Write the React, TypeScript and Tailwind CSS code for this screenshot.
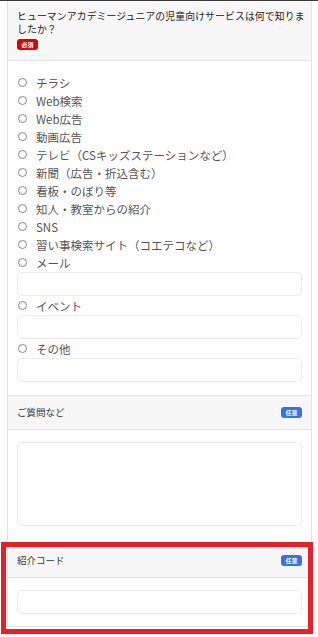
import React from "react";

const options: { label: string; input?: boolean }[] = [
  { label: "チラシ" },
  { label: "Web検索" },
  { label: "Web広告" },
  { label: "動画広告" },
  { label: "テレビ（CSキッズステーションなど）" },
  { label: "新聞（広告・折込含む）" },
  { label: "看板・のぼり等" },
  { label: "知人・教室からの紹介" },
  { label: "SNS" },
  { label: "習い事検索サイト（コエテコなど）" },
  { label: "メール", input: true },
  { label: "イベント", input: true },
  { label: "その他", input: true },
];

function Badge({ text, color }: { text: string; color: "red" | "blue" }) {
  return (
    <span
      className={
        "inline-flex items-center justify-center w-[21px] h-[11px] rounded-[3px] text-white text-[6px] leading-none font-bold " +
        (color === "red" ? "bg-[#cc0a0a]" : "bg-[#3a72d8]")
      }
    >
      {text}
    </span>
  );
}

export default function App() {
  return (
    <div className="relative w-[318px] h-[637px] bg-white overflow-hidden font-['Noto_Sans_CJK_JP','Noto_Sans',sans-serif]">
      <div className="h-[1px] bg-[#3a3a3a]" />
      <div className="ml-[7px] w-[305px] border-x border-b border-[#e2e2e2]">
        {/* Section 1 header */}
        <div className="bg-[#f7f7f7] px-[9px] pt-[9px] pb-[10px] border-b border-[#e4e4e4]">
          <p className="text-[9.8px] leading-[12.5px] text-[#222] font-normal tracking-[0.15px] whitespace-nowrap">
            ヒューマンアカデミージュニアの児童向けサービスは何で知りま
            <br />
            したか？
          </p>
          <div className="mt-[4px] flex">
            <Badge text="必須" color="red" />
          </div>
        </div>
        {/* Section 1 content */}
        <div className="px-[9px] pt-[12.5px] pb-[12.5px]">
          {options.map((o) => (
            <div key={o.label}>
              <label className="flex items-center h-[18px]">
                <span className="ml-[1px] w-[9px] h-[9px] rounded-full border border-[#888] bg-white" />
                <span className="ml-[9px] text-[11.5px] leading-[18px] text-[#555]">{o.label}</span>
              </label>
              {o.input && (
                <div className="h-[24px] mb-[1px] rounded-[5px] border border-[#ececec] bg-white" />
              )}
            </div>
          ))}
        </div>
        {/* Section 2 header */}
        <div className="flex items-center justify-between h-[35px] px-[9px] bg-[#f7f7f7] border-y border-[#e4e4e4]">
          <span className="text-[9.5px] text-[#333] font-normal">ご質問など</span>
          <Badge text="任意" color="blue" />
        </div>
        <div className="px-[9px] pt-[12px] pb-[17px]">
          <div className="h-[84px] rounded-[5px] border border-[#ececec] bg-white" />
        </div>
        {/* Section 3 header */}
        <div className="flex items-center justify-between h-[35px] px-[9px] bg-[#f7f7f7] border-y border-[#e4e4e4]">
          <span className="text-[9.5px] text-[#333] font-normal">紹介コード</span>
          <Badge text="任意" color="blue" />
        </div>
        <div className="px-[9px] pt-[12px] pb-[12px]">
          <div className="h-[24px] rounded-[5px] border border-[#ececec] bg-white" />
        </div>
      </div>
      {/* annotation overlay */}
      <div className="absolute left-[1px] top-[542px] w-[312px] h-[92px] border-[5px] border-[#e3212b] pointer-events-none" />
    </div>
  );
}
